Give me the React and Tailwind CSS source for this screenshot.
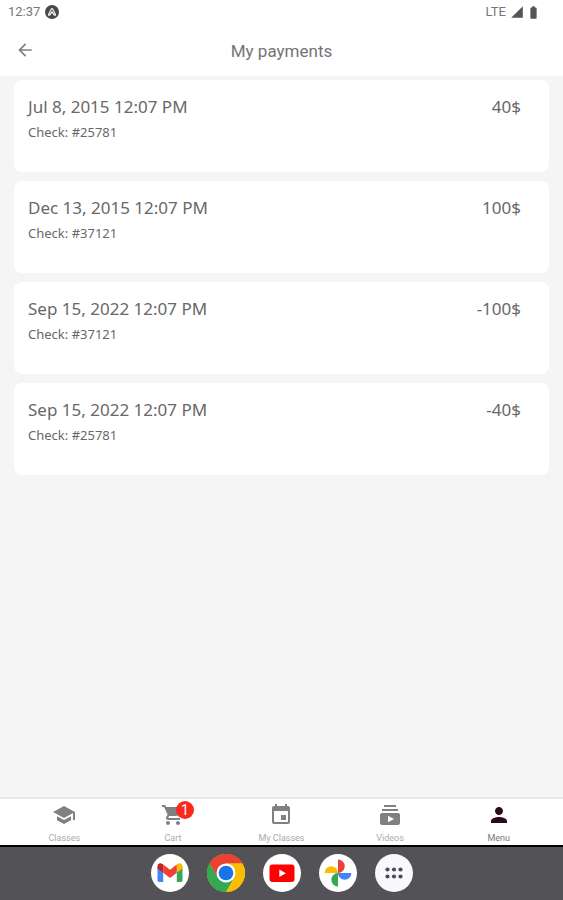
import React, { useState } from "react";
import {
    MdArrowBack,
    MdBatteryFull,
    MdEvent,
    MdPerson,
    MdSchool,
    MdShoppingCart,
    MdSignalCellular4Bar,
    MdSubscriptions,
} from "react-icons/md";

const payments = [
    { date: 'Jul 8, 2015 12:07 PM', check: '25781', amount: '40$' },
    { date: 'Dec 13, 2015 12:07 PM', check: '37121', amount: '100$' },
    { date: 'Sep 15, 2022 12:07 PM', check: '37121', amount: '-100$' },
    { date: 'Sep 15, 2022 12:07 PM', check: '25781', amount: '-40$' },
]

const tabs = [
    { name: 'Classes', icon: MdSchool },
    { name: 'Cart', icon: MdShoppingCart, badge: 1 },
    { name: 'My Classes', icon: MdEvent },
    { name: 'Videos', icon: MdSubscriptions },
    { name: 'Menu', icon: MdPerson },
]

const StatusBar = () => (
    <div className="h-6 px-2 flex items-center justify-between text-[#777777]">
        <div className="flex items-center gap-[5px]">
            <span className="text-[13px]">12:37</span>
            <svg className="size-[14px]" viewBox="0 0 14 14">
                <circle cx="7" cy="7" r="7" fill="#484848" />
                <path d="M3.4 9.8 6.2 4.2Q7 3 7.8 4.2L10.6 9.8Q9.6 10.8 8.7 9.4L7 6.8 5.3 9.4Q4.4 10.8 3.4 9.8Z" fill="none" stroke="#fff" strokeWidth="1.1" strokeLinejoin="round" />
            </svg>
        </div>
        <div className="flex items-center pr-[14px]">
            <span className="text-[13px]">LTE</span>
            <MdSignalCellular4Bar className="size-[14px] ml-1 text-[#555555]" />
            <MdBatteryFull className="size-[15px] ml-[2px] text-[#555555]" />
        </div>
    </div>
)

const Header = () => (
    <header className="h-[52px] px-[15px] pt-[2px] grid grid-cols-[20px_1fr_20px] items-center">
        <button type="button" aria-label="Back" className="pb-[2px] text-[#808080]">
            <MdArrowBack className="size-5" />
        </button>
        <h1 className="text-center text-[17px] leading-6 font-normal text-[#747474]">My payments</h1>
    </header>
)

const PaymentCard = ({ payment }) => (
    <li className="h-[92px] pl-[14px] pr-7 pt-[15px] flex items-start justify-between rounded-lg bg-white font-['Noto_Sans',sans-serif] text-[#686868]">
        <div>
            <p className="text-[17px] leading-6">{payment.date}</p>
            <p className="text-[13px] leading-[26px]">Check: #{payment.check}</p>
        </div>
        <p className="text-[17px] leading-6">{payment.amount}</p>
    </li>
)

const GmailIcon = () => (
    <svg className="size-[38px]" viewBox="0 0 38 38">
        <circle cx="19" cy="19" r="19" fill="#fff" />
        <path d="M6.5 13v13.2q0 1.8 1.8 1.8h3.9V15.5z" fill="#4285f4" />
        <path d="M31.5 13v13.2q0 1.8-1.8 1.8h-3.9V15.5z" fill="#34a853" />
        <path d="M25.8 10.6v8.2l5.7-4.3v-2.2c0-2.9-2.7-3.8-4.6-2.5z" fill="#fbbc04" />
        <path d="M12.2 10.6v8.2l-5.7-4.3v-2.2c0-2.9 2.7-3.8 4.6-2.5z" fill="#c5221f" />
        <path d="M12.2 18.8v-8.2l6.8 5.1 6.8-5.1v8.2L19 23.9z" fill="#ea4335" />
    </svg>
)

const ChromeIcon = () => (
    <svg className="size-[38px]" viewBox="0 0 38 38">
        <circle cx="19" cy="19" r="19" fill="#fbbc04" />
        <path d="M2.5 9.5A19 19 0 0 1 35.5 9.5H19L10.8 23.8Z" fill="#ea4335" />
        <path d="M2.5 9.5A19 19 0 0 0 19 38L27.2 23.8H10.8Z" fill="#34a853" />
        <path d="M35.5 9.5H19L27.2 23.8 19 38A19 19 0 0 0 35.5 9.5Z" fill="#fbbc04" />
        <circle cx="19" cy="19" r="9.5" fill="#fff" />
        <circle cx="19" cy="19" r="7.3" fill="#1a73e8" />
    </svg>
)

const YoutubeIcon = () => (
    <svg className="size-[38px]" viewBox="0 0 38 38">
        <circle cx="19" cy="19" r="19" fill="#fff" />
        <rect x="6.5" y="10.5" width="25" height="17.5" rx="3" fill="#ff0000" />
        <path d="M16.3 15.5v7.5l6.6-3.75z" fill="#fff" />
    </svg>
)

const PhotosIcon = () => (
    <svg className="size-[38px]" viewBox="0 0 38 38">
        <circle cx="19" cy="19" r="19" fill="#fff" />
        <path d="M19 5.6a6.7 6.7 0 0 1 0 13.4z" fill="#ea4335" />
        <path d="M32.4 19a6.7 6.7 0 0 1-13.4 0z" fill="#4285f4" />
        <path d="M19 32.4a6.7 6.7 0 0 1 0-13.4z" fill="#34a853" />
        <path d="M5.6 19a6.7 6.7 0 0 1 13.4 0z" fill="#fbbc04" />
    </svg>
)

const AppsIcon = () => (
    <svg className="size-[38px]" viewBox="0 0 38 38">
        <circle cx="19" cy="19" r="19" fill="#f8f8fd" />
        {
            [12.5, 19, 25.5].map((x) => (
                <g key={x} fill="#4a4b5c">
                    <circle cx={x} cy="15.5" r="2.1" />
                    <circle cx={x} cy="22.5" r="2.1" />
                </g>
            ))
        }
    </svg>
)

const dockApps = [
    { name: 'Gmail', icon: GmailIcon },
    { name: 'Chrome', icon: ChromeIcon },
    { name: 'YouTube', icon: YoutubeIcon },
    { name: 'Photos', icon: PhotosIcon },
    { name: 'All apps', icon: AppsIcon },
]

const App = () => {
    const [active, setActive] = useState('Menu')

    return (
        <div className="min-h-screen flex flex-col bg-[#f5f5f5] font-[Roboto,sans-serif]">
            <div className="bg-white">
                <StatusBar />
                <Header />
            </div>
            <main className="flex-1 px-[14px] pt-1">
                <ul className="flex flex-col gap-[9px]">
                    {
                        payments.map((payment, index) => (
                            <PaymentCard key={index} payment={payment} />
                        ))
                    }
                </ul>
            </main>
            <nav className="h-12 px-[10px] grid grid-cols-5 bg-white border-t-2 border-[#e8e8e8]">
                {
                    tabs.map(({ name, icon: Icon, badge }) => (
                        <button
                            key={name}
                            type="button"
                            onClick={() => setActive(name)}
                            className={`flex flex-col items-center pt-1 ${active === name ? 'text-[#2b0a1e]' : 'text-[#808080]'}`}
                        >
                            <span className="relative">
                                <Icon className="size-6" />
                                {
                                    badge && (
                                        <span className="absolute -top-[2px] left-[15px] size-[18px] rounded-full bg-[#f9291f] text-white text-sm leading-[18px] text-center">{badge}</span>
                                    )
                                }
                            </span>
                            <span className={`mt-[5px] text-[9px] leading-3 ${active === name ? 'text-[#777777]' : 'text-[#aaaaaa]'}`}>{name}</span>
                        </button>
                    ))
                }
            </nav>
            <footer className="h-[55px] pb-[2px] flex items-center justify-center gap-[18px] bg-[#535257] border-t-2 border-black">
                {
                    dockApps.map(({ name, icon: Icon }) => (
                        <button key={name} type="button" aria-label={name}>
                            <Icon />
                        </button>
                    ))
                }
            </footer>
        </div>
    );
};

export default App;
